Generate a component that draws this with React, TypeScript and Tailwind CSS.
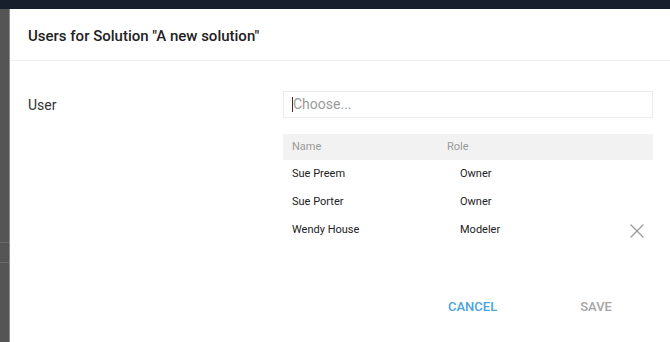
import { X } from "lucide-react";

const members = [
  { name: "Sue Preem", role: "Owner", removable: false },
  { name: "Sue Porter", role: "Owner", removable: false },
  { name: "Wendy House", role: "Modeler", removable: true },
];

export default function App() {
  return (
    <div className="flex h-[342px] w-[670px] flex-col overflow-hidden bg-[#161f2b] font-['Roboto',sans-serif]">
      <div className="h-[9px] shrink-0" />
      <div className="flex flex-1">
        <div className="flex w-[10px] shrink-0 flex-col border-r border-[#8a8a8a] bg-[#555555]">
          <div className="h-[233px]" />
          <div className="h-px bg-[#6a6a6a]" />
          <div className="h-[19px]" />
          <div className="h-px bg-[#6a6a6a]" />
        </div>

        <div className="flex flex-1 flex-col bg-white">
          <div className="flex h-[52px] items-center border-b border-[#efefef] pl-[18px] pt-[3px]">
            <h2 className="text-[15px] font-medium text-[#222]">Users for Solution "A new solution"</h2>
          </div>

          <div className="flex pl-[18px] pt-[30px]">
            <div className="w-[255px] pt-[4px] text-[14px] text-[#333]">User</div>
            <div className="w-[370px]">
              <div className="flex h-[27px] items-center border border-[#ececec] px-2">
                <span className="h-[15px] w-px bg-[#333]" />
                <span className="text-[14px] text-[#9a9a9a]">Choose...</span>
              </div>

              <div className="mt-[16px] flex h-[26px] items-center bg-[#f2f2f2] pl-[9px] pt-px text-[11px] text-[#9a9a9a]">
                <span className="w-[155px]">Name</span>
                <span>Role</span>
              </div>

              {members.map((m) => (
                <div key={m.name} className="flex h-[28px] items-center pl-[9px] pt-px text-[11px] text-[#222]">
                  <span className="w-[168px]">{m.name}</span>
                  <span className="flex-1">{m.role}</span>
                  {m.removable && <X className="mr-[4px] h-6 w-6 text-[#9a9a9a]" strokeWidth={1.25} />}
                </div>
              ))}
            </div>
          </div>

          <div className="flex pl-[438px] pt-[53px] text-[13px] font-medium">
            <span className="text-[#4aa3df]">CANCEL</span>
            <span className="ml-[83px] text-[#a5a5a5]">SAVE</span>
          </div>
        </div>
      </div>
    </div>
  );
}
